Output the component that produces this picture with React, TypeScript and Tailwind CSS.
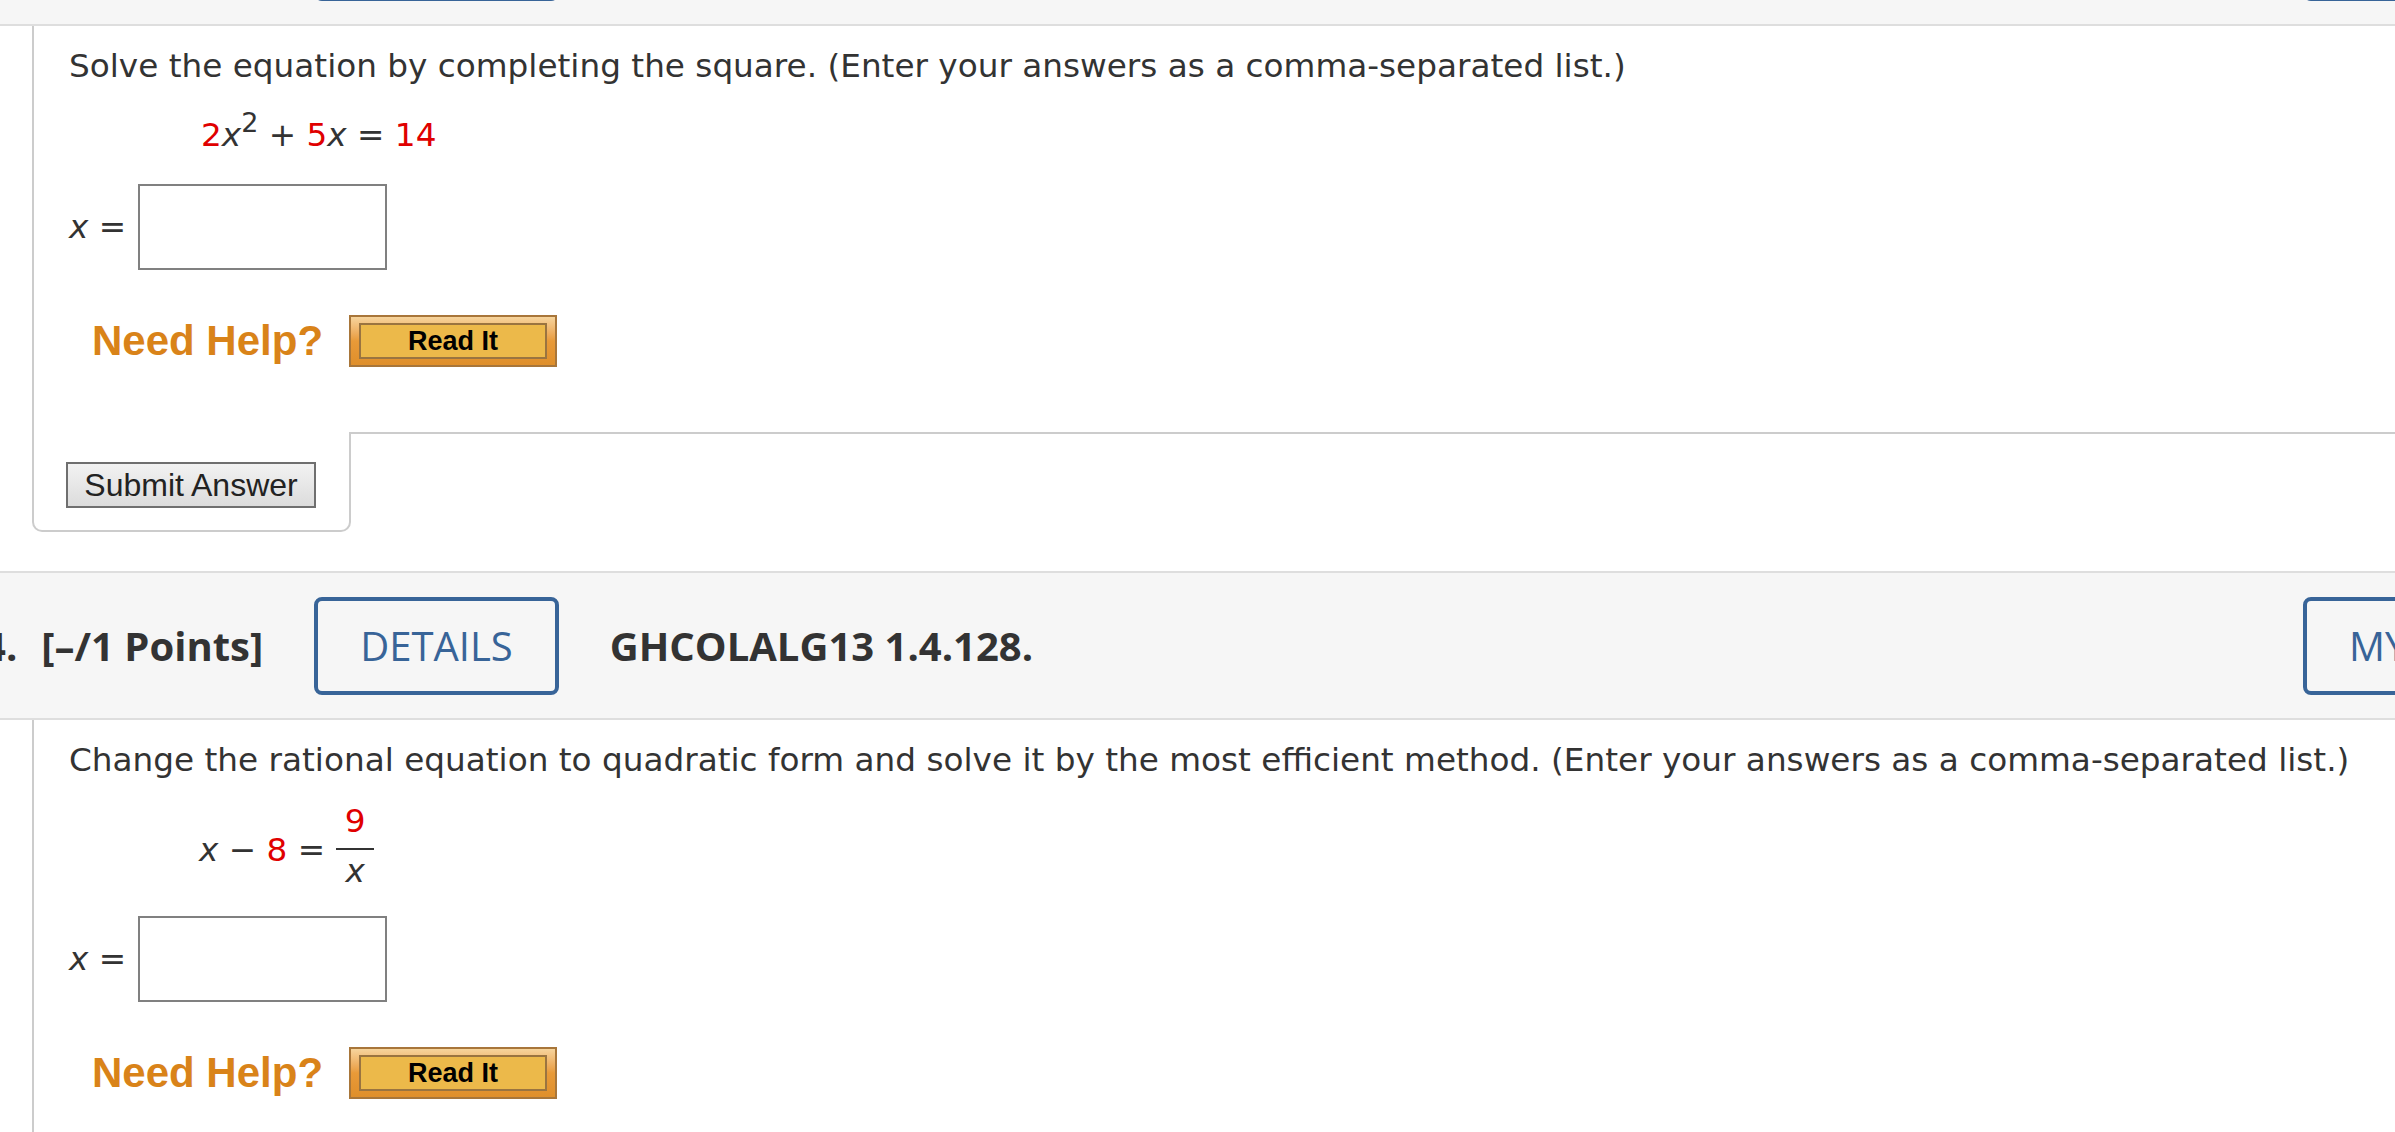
import React from 'react';

const body = "font-['DejaVu_Sans',Verdana,sans-serif] text-[#333333]";

function Band({ num, className }: { num: string; className: string }) {
  return (
    <div className={`flex h-[149px] items-center border-y-2 border-[#dedede] bg-[#f6f6f6] font-['Open_Sans',sans-serif] text-[40px] leading-none whitespace-nowrap ${className}`}>
      <span className="-ml-[17px] font-bold text-[#333333]">{num}.</span>
      <span className="ml-[24px] font-bold text-[#333333]">[–/1 Points]</span>
      <button className="ml-[51px] h-[98px] rounded-[8px] border-4 border-[#386498] px-[42px] text-[#386498]">
        DETAILS
      </button>
      <span className="ml-[51px] font-bold text-[#333333]">GHCOLALG13 1.4.128.</span>
      <button className="-mr-[153px] ml-auto h-[98px] w-[245px] shrink-0 rounded-[8px] border-4 border-[#386498] pl-[42px] text-left text-[#386498] whitespace-nowrap">
        MY NOTES
      </button>
    </div>
  );
}

function AnswerRow({ className }: { className: string }) {
  return (
    <div className={`flex h-[86px] items-center ${className}`}>
      <span className="w-[69px] text-[32.7px] leading-[40px]">
        <i>x</i> =
      </span>
      <input type="text" readOnly className="h-[86px] w-[249px] border-2 border-[#808080] bg-white outline-none" />
    </div>
  );
}

function HelpRow({ className }: { className: string }) {
  return (
    <div className={`flex h-[52px] items-center pl-[23px] ${className}`}>
      <span className="font-['Liberation_Sans',Arial,sans-serif] text-[42px] font-bold leading-none text-[#d98319]">
        Need Help?
      </span>
      <button className="ml-[26px] h-[52px] w-[208px] border-2 border-[#a8763a] bg-linear-to-b from-[#f6d49c] via-[#e89a38] to-[#df8f2b] px-[8px] py-[6px]">
        <span className="flex h-full w-full items-center justify-center border-2 border-[#9a7440] bg-[#ecb94a] font-['Liberation_Sans',Arial,sans-serif] text-[27px] font-bold leading-none text-black">
          Read It
        </span>
      </button>
    </div>
  );
}

export default function App() {
  const red = 'text-[#e00000]';
  return (
    <div className={`h-screen w-full overflow-hidden bg-white ${body}`}>
      {/* question above, only the bottom of its header shows */}
      <Band num="3" className="-mt-[123px]" />

      {/* question 3 body */}
      <div className="ml-[32px]">
        <div className="border-l-2 border-[#cccccc] pb-[65px] pl-[35px] pt-[20px]">
          <p className="text-[32.7px] leading-[40px]">
            Solve the equation by completing the square. (Enter your answers as a comma-separated list.)
          </p>
          <p className="mt-[29px] pl-[132px] text-[32.7px] leading-[40px]">
            <span className={red}>2</span>
            <i>x</i>
            <span className="relative -top-[14px] text-[27px]">2</span> + <span className={red}>5</span>
            <i>x</i> = <span className={red}>14</span>
          </p>
          <AnswerRow className="mt-[27px]" />
          <HelpRow className="mt-[45px]" />
        </div>
        <div className="flex">
          <div className="w-[319px] rounded-b-[10px] border-x-2 border-b-2 border-[#cccccc] pb-[22px] pl-[32px] pt-[30px]">
            <button className="h-[46px] w-[250px] border-2 border-[#6f6f6f] bg-linear-to-b from-[#f2f2f2] to-[#dcdcdc] font-['Liberation_Sans',Arial,sans-serif] text-[32px] leading-none text-[#222222]">
              Submit Answer
            </button>
          </div>
          <div className="flex-1 border-t-2 border-[#cccccc]" />
        </div>
      </div>

      <Band num="4" className="mt-[39px]" />

      {/* question 4 body */}
      <div className="ml-[32px]">
        <div className="border-l-2 border-[#cccccc] pb-[65px] pl-[35px] pt-[20px]">
          <p className="text-[32.7px] leading-[40px]">
            Change the rational equation to quadratic form and solve it by the most efficient method. (Enter your answers as a comma-separated list.)
          </p>
          <div className="mt-[24px] flex items-center pl-[130px] text-[32.7px]">
            <span className="pt-[8px] leading-[40px]">
              <i>x</i> − <span className={red}>8</span> =
            </span>
            <span className="ml-[11px] inline-flex w-[38px] flex-col items-center">
              <span className={`leading-[34px] ${red}`}>9</span>
              <span className="mt-[10px] h-[2px] w-full bg-[#333333]" />
              <span className="mt-[4px] leading-[34px]">
                <i>x</i>
              </span>
            </span>
          </div>
          <AnswerRow className="mt-[28px]" />
          <HelpRow className="mt-[45px]" />
        </div>
      </div>
    </div>
  );
}
